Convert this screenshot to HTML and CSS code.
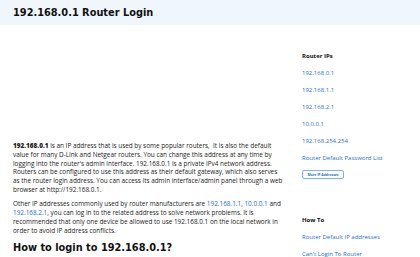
FILE: index.html
```html
<!DOCTYPE html>
<html lang="en">
<head>
  <meta charset="UTF-8" />
  <meta name="viewport" content="width=device-width, initial-scale=1.0" />
  <title>192.168.0.1 Router Login</title>
  <link rel="stylesheet" href="styles.css">
</head>
<body>
  <header class="top">
    <div class="brand">192.168.0.1 Router Login</div>
  </header>

  <div class="page">
    <main class="main">
      <div class="ad"></div>
      <p><b>192.168.0.1</b> is an IP address that is used by some popular routers,&nbsp; It is also the default value for many D-Link and Netgear routers. You can change this address at any time by logging into the router's admin interface. 192.168.0.1 is a private IPv4 network address. Routers can be configured to use this address as their default gateway, which also serves as the router login address. You can access its admin interface/admin panel through a web browser at http://192.168.0.1.</p>
      <p>Other IP addresses commonly used by router manufacturers are <a href="#">192.168.1.1</a>, <a href="#">10.0.0.1</a> and <a href="#">192.168.2.1</a>, you can log in to the related address to solve network problems. It is recommended that only one device be allowed to use 192.168.0.1 on the local network in order to avoid IP address conflicts.</p>
      <h2>How to login to 192.168.0.1?</h2>
    </main>

    <aside class="side">
      <h3>Router IPs</h3>
      <ul>
        <li><a href="#">192.168.0.1</a></li>
        <li><a href="#">192.168.1.1</a></li>
        <li><a href="#">192.168.2.1</a></li>
        <li><a href="#">10.0.0.1</a></li>
        <li><a href="#">192.168.254.254</a></li>
        <li><a href="#">Router Default Password List</a></li>
      </ul>
      <button type="button" class="more">More IP Addresses</button>

      <h3 class="howto">How To</h3>
      <ul>
        <li><a href="#">Router Default IP addresses</a></li>
        <li><a href="#">Can't Login To Router</a></li>
      </ul>
    </aside>
  </div>
</body>
</html>
```

FILE: styles.css
```css
body { margin: 0; font-family: "Open Sans", sans-serif; font-size: 6.4px; line-height: 8.8px; color: #222; background: #fff; }
a { color: #1a6fd0; text-decoration: none; }

.top { background: #f0f7fc; height: 25px; display: flex; align-items: center; padding: 0 13px; }
.brand { font-family: "DejaVu Sans", sans-serif; font-weight: bold; font-size: 9.8px; color: #111; padding-top: 1px; }

.page { display: flex; padding: 0 13px; }
.main { width: 271px; flex: none; }
.ad { height: 117px; }
.main p { margin: 0 0 5.5px; }
.main b { font-weight: 800; }
.main h2 { font-family: "DejaVu Sans", sans-serif; font-size: 9.8px; line-height: 13px; margin: 6px 0 0; color: #111; }

.side { margin-left: 18px; padding-top: 27px; width: 105px; }
.side h3 { font-size: 6px; font-weight: bold; margin: 0; line-height: 8px; color: #111; }
.side ul { list-style: none; margin: 0; padding: 0; }
.side li { margin-top: 9px; line-height: 8px; font-size: 6px; }
.more { margin-top: 8px; font-family: "Open Sans", sans-serif; font-size: 3.4px; font-weight: bold; color: #1a6fd0; background: #fff; border: 1px solid #7fb2ec; border-radius: 2px; padding: 0 4px; height: 9px; width: 42px; }
.side .howto { margin-top: 37px; }
```
